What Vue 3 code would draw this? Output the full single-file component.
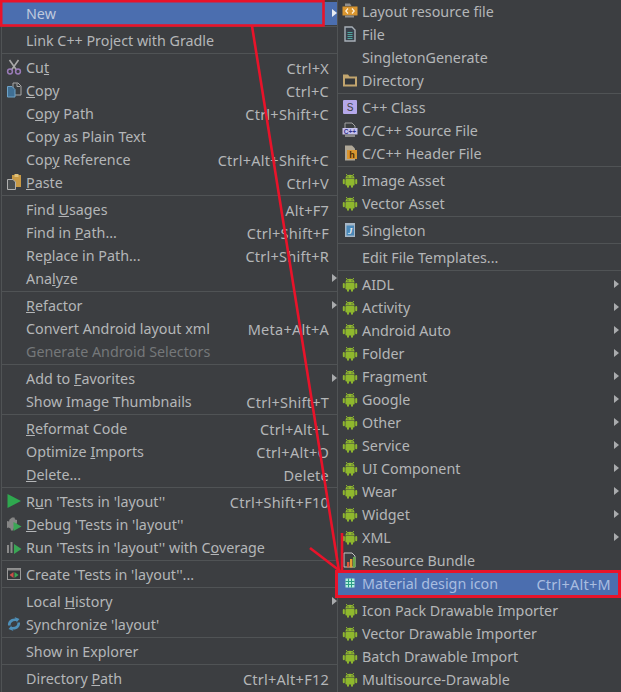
<template>
  <div class="screen">
    <svg class="defs" width="0" height="0">
      <defs>
        <symbol id="android" viewBox="0 0 16 16">
          <path d="M4.2 2 5.4 3.6M11.8 2 10.6 3.6" stroke="#8fb82e" stroke-width="1" fill="none"/>
          <path d="M3.4 6.4C3.6 3.9 5.6 2.8 8 2.8s4.4 1.1 4.6 3.6z" fill="#8fb82e"/>
          <rect x="3.4" y="7" width="9.2" height="6.4" rx="1" fill="#8fb82e"/>
          <rect x="0.8" y="7" width="2" height="5.2" rx="1" fill="#8fb82e"/>
          <rect x="13.2" y="7" width="2" height="5.2" rx="1" fill="#8fb82e"/>
          <rect x="5" y="12.6" width="2" height="3.2" rx="1" fill="#8fb82e"/>
          <rect x="9" y="12.6" width="2" height="3.2" rx="1" fill="#8fb82e"/>
          <circle cx="6" cy="4.8" r=".6" fill="#3c3f41"/>
          <circle cx="10" cy="4.8" r=".6" fill="#3c3f41"/>
        </symbol>
        <symbol id="cut" viewBox="0 0 16 16">
          <path d="M3.5 1 10.5 11M12.5 1 5.5 11" stroke="#a9a9a9" stroke-width="1.6" fill="none"/>
          <circle cx="4" cy="12.5" r="2.4" fill="none" stroke="#9a7bb8" stroke-width="1.5"/>
          <circle cx="12" cy="12.5" r="2.4" fill="none" stroke="#9a7bb8" stroke-width="1.5"/>
        </symbol>
        <symbol id="copy" viewBox="0 0 16 16">
          <path d="M7 1h5l3 3v9H7z" fill="#3c3f41" stroke="#a8a8a8"/>
          <path d="M1.500 4.500H6l3 3v7.500H1.500z" fill="#3f6f94" stroke="#6fa3c7"/>
          <path d="M11 1.500v3h3" fill="none" stroke="#a8a8a8"/>
        </symbol>
        <symbol id="paste" viewBox="0 0 16 16">
          <rect x="6" y="1" width="9" height="12" fill="#c99a45"/>
          <rect x="8.500" y="0" width="4" height="3" fill="#e0c078"/>
          <path d="M1.500 5.500H7l2.500 2.500v7.500h-8z" fill="#4a4d4f" stroke="#b0b0b0"/>
        </symbol>
        <symbol id="run" viewBox="0 0 16 16">
          <path d="M1.500 1 15 8 1.500 15z" fill="#2fa84f"/>
        </symbol>
        <symbol id="debug" viewBox="0 0 16 16">
          <path d="M6 1.500h2.500l.5 2 2 .5v3l-3 5-1 2.500H5l-.5-2-2-1-1.500.5V5l2 .5.500-2z" fill="#858585"/>
          <path d="M7.500 6 15.500 10.500 7.500 15z" fill="#3aa655"/>
        </symbol>
        <symbol id="coverage" viewBox="0 0 16 16">
          <rect x="1" y="6" width="2" height="8" fill="#8a8a8a"/>
          <rect x="4.500" y="3" width="2" height="11" fill="#8a8a8a"/>
          <path d="M8 5 15.500 10 8 15z" fill="#3aa655"/>
        </symbol>
        <symbol id="create" viewBox="0 0 16 16">
          <rect x="1.500" y="2.500" width="13" height="11" fill="#34373a" stroke="#9a9a9a"/>
          <rect x="1.500" y="2.500" width="13" height="2" fill="#8a8a8a"/>
          <path d="M7.500 6v6L3.500 9z" fill="#c9504a"/>
          <path d="M8.500 6v6l4-3z" fill="#3aa655"/>
        </symbol>
        <symbol id="sync" viewBox="0 0 16 16">
          <path d="M2 9.500C1.500 5 5 2 9.500 2.500L8.500 1l5 2-3 3.500V5C7 4.500 4.500 6 4.500 9.500z" fill="#4e8fb8"/>
          <path d="M14 6.500C14.500 11 11 14 6.500 13.500L7.500 15l-5-2 3-3.500V11c3.500.5 6-1 6-4.500z" fill="#4e8fb8"/>
        </symbol>
        <symbol id="layout" viewBox="0 0 16 16">
          <path d="M3 3V0.500h5L9.500 3z" fill="#8e8e8e"/>
          <rect x="0.500" y="3.500" width="15" height="9" fill="#d9952f"/>
          <path d="M6 5.500 3.800 8 6 10.500M10 5.500 12.200 8 10 10.500" stroke="#fff2d8" stroke-width="1.200" fill="none"/>
          <rect x="3" y="12.500" width="9" height="2" fill="#8e8e8e"/>
        </symbol>
        <symbol id="file" viewBox="0 0 16 16">
          <path d="M3 1h7l3 3v11H3z" fill="#38404a" stroke="#a8b0b8" stroke-width="1.400"/>
          <path d="M5.500 6.500h5M5.500 8.500h5M5.500 10.500h5M5.500 12.500h5" stroke="#4fa7a0"/>
        </symbol>
        <symbol id="folder" viewBox="0 0 16 16">
          <path d="M1 2.500h5l1.500 2H15v10H1z" fill="#c2a56e"/>
          <rect x="3" y="6.500" width="10" height="6" fill="#34373a"/>
        </symbol>
        <symbol id="cppclass" viewBox="0 0 16 16">
          <rect x="1" y="1" width="14" height="14" rx="1" fill="#b5a8ea"/>
          <text x="8" y="12" font-size="10" text-anchor="middle" fill="#3c3f41" font-family="Liberation Sans, sans-serif">S</text>
        </symbol>
        <symbol id="cppfile" viewBox="0 0 16 16">
          <path d="M3 1h7l3 3v3H3z" fill="#3c3f41" stroke="#a0a0a0"/>
          <rect x="0.500" y="6" width="15" height="6.500" fill="#c6c1ee"/>
          <text x="8" y="11.500" font-size="6.500" font-weight="700" text-anchor="middle" fill="#33338a" font-family="Liberation Sans, sans-serif">C++</text>
          <path d="M3 12.500h10v2.500H3z" fill="#8a8a8a"/>
        </symbol>
        <symbol id="header" viewBox="0 0 16 16">
          <path d="M3 0.500h7l3 3v12H3z" fill="#b0a898"/>
          <rect x="5" y="5" width="10" height="9" fill="#d9952f"/>
          <text x="10" y="12.500" font-size="9" font-weight="700" text-anchor="middle" fill="#4d2c05" font-family="Liberation Sans, sans-serif">h</text>
        </symbol>
        <symbol id="singleton" viewBox="0 0 16 16">
          <path d="M3 1h10v14H3z" fill="#a7b7c6"/>
          <rect x="4.500" y="3.500" width="7.500" height="10" fill="#4a88b8"/>
          <text x="8.200" y="12" font-size="9" font-style="italic" font-weight="700" text-anchor="middle" fill="#e6edf3" font-family="Liberation Serif, serif">J</text>
        </symbol>
        <symbol id="bundle" viewBox="0 0 16 16">
          <path d="M2 1h8l3 3v11H2z" fill="#3c3f41" stroke="#c4c4c4"/>
          <rect x="5" y="10" width="2.400" height="5.500" fill="#d95b3c"/>
          <rect x="8" y="7" width="2.400" height="8.500" fill="#e0a030"/>
          <rect x="11" y="5" width="2.400" height="10.500" fill="#66a84a"/>
        </symbol>
        <symbol id="grid" viewBox="0 0 16 16">
          <rect x="3.500" y="3.500" width="9" height="9" fill="#b4f0de"/>
          <path d="M6.500 3.500v9M9.500 3.500v9M3.500 6.500h9M3.500 9.500h9" stroke="#2b9c86" stroke-width="1"/>
        </symbol>
      </defs>
    </svg>

    <div class="menus">
      <div class="menu menu-left">
        <template v-for="(item, i) in leftItems" :key="i">
          <div v-if="item.sep" class="sep"></div>
          <div v-else class="row" :class="{ active: item.active, disabled: item.disabled }">
            <svg v-if="item.icon" class="icon" width="16" height="16"><use :href="'#' + item.icon" /></svg>
            <span class="label">{{ before(item) }}<u v-if="item.u !== undefined">{{ item.label[item.u] }}</u>{{ after(item) }}</span>
            <span v-if="item.key" class="key">{{ item.key }}</span>
            <i v-if="item.sub" class="arrow"></i>
          </div>
        </template>
      </div>
      <div class="menu menu-right">
        <template v-for="(item, i) in rightItems" :key="i">
          <div v-if="item.sep" class="sep"></div>
          <div v-else class="row" :class="{ active: item.active }">
            <svg v-if="item.icon" class="icon" width="16" height="16"><use :href="'#' + item.icon" /></svg>
            <span class="label">{{ item.label }}</span>
            <span v-if="item.key" class="key">{{ item.key }}</span>
            <i v-if="item.sub" class="arrow"></i>
          </div>
        </template>
      </div>
    </div>

    <!-- red marks drawn over the screenshot -->
    <svg class="marks" width="621" height="692">
      <g fill="none" stroke="#e8132a">
        <rect x="1.200" y="1.200" width="322.300" height="24.300" stroke-width="2.600" />
        <rect x="336.500" y="571.500" width="283" height="25" stroke-width="3" />
        <path d="M252 26 339 571" stroke-width="2.600" />
        <path d="M310 548 340 571" stroke-width="2.600" />
        <path d="M342 533V571" stroke-width="2.600" />
      </g>
    </svg>
  </div>
</template>

<script setup>
const sep = { sep: true }

const leftItems = [
  { label: 'New', active: true, sub: true },
  sep,
  { label: 'Link C++ Project with Gradle' },
  sep,
  { label: 'Cut', u: 2, key: 'Ctrl+X', icon: 'cut' },
  { label: 'Copy', u: 0, key: 'Ctrl+C', icon: 'copy' },
  { label: 'Copy Path', u: 1, key: 'Ctrl+Shift+C' },
  { label: 'Copy as Plain Text' },
  { label: 'Copy Reference', u: 3, key: 'Ctrl+Alt+Shift+C' },
  { label: 'Paste', u: 0, key: 'Ctrl+V', icon: 'paste' },
  sep,
  { label: 'Find Usages', u: 5, key: 'Alt+F7' },
  { label: 'Find in Path...', u: 8, key: 'Ctrl+Shift+F' },
  { label: 'Replace in Path...', u: 2, key: 'Ctrl+Shift+R' },
  { label: 'Analyze', u: 3, sub: true },
  sep,
  { label: 'Refactor', u: 0, sub: true },
  { label: 'Convert Android layout xml', key: 'Meta+Alt+A' },
  { label: 'Generate Android Selectors', disabled: true },
  sep,
  { label: 'Add to Favorites', u: 7, sub: true },
  { label: 'Show Image Thumbnails', key: 'Ctrl+Shift+T' },
  sep,
  { label: 'Reformat Code', u: 0, key: 'Ctrl+Alt+L' },
  { label: 'Optimize Imports', u: 9, key: 'Ctrl+Alt+O' },
  { label: 'Delete...', u: 0, key: 'Delete' },
  sep,
  { label: "Run 'Tests in 'layout''", u: 1, key: 'Ctrl+Shift+F10', icon: 'run' },
  { label: "Debug 'Tests in 'layout''", u: 0, icon: 'debug' },
  { label: "Run 'Tests in 'layout'' with Coverage", u: 30, icon: 'coverage' },
  sep,
  { label: "Create 'Tests in 'layout''...", icon: 'create' },
  sep,
  { label: 'Local History', u: 6, sub: true },
  { label: "Synchronize 'layout'", icon: 'sync' },
  sep,
  { label: 'Show in Explorer' },
  sep,
  { label: 'Directory Path', u: 10, key: 'Ctrl+Alt+F12' }
]

const rightItems = [
  { label: 'Layout resource file', icon: 'layout' },
  { label: 'File', icon: 'file' },
  { label: 'SingletonGenerate' },
  { label: 'Directory', icon: 'folder' },
  sep,
  { label: 'C++ Class', icon: 'cppclass' },
  { label: 'C/C++ Source File', icon: 'cppfile' },
  { label: 'C/C++ Header File', icon: 'header' },
  sep,
  { label: 'Image Asset', icon: 'android' },
  { label: 'Vector Asset', icon: 'android' },
  sep,
  { label: 'Singleton', icon: 'singleton' },
  sep,
  { label: 'Edit File Templates...' },
  sep,
  ...['AIDL', 'Activity', 'Android Auto', 'Folder', 'Fragment', 'Google', 'Other', 'Service', 'UI Component', 'Wear', 'Widget', 'XML'].map((label) => ({ label, icon: 'android', sub: true })),
  { label: 'Resource Bundle', icon: 'bundle' },
  { label: 'Material design icon', key: 'Ctrl+Alt+M', icon: 'grid', active: true },
  sep,
  { label: 'Icon Pack Drawable Importer', icon: 'android' },
  { label: 'Vector Drawable Importer', icon: 'android' },
  { label: 'Batch Drawable Import', icon: 'android' },
  { label: 'Multisource-Drawable', icon: 'android' }
]

function before(item) {
  return item.u === undefined ? item.label : item.label.slice(0, item.u)
}

function after(item) {
  return item.u === undefined ? '' : item.label.slice(item.u + 1)
}
</script>

<style>
html,
body {
  margin: 0;
  background: #3c3e41;
}
</style>

<style scoped>
.screen {
  position: relative;
  width: 621px;
  height: 692px;
  overflow: hidden;
  background: #3c3e41;
  font-family: "Noto Sans", "Open Sans", sans-serif;
  font-size: 14.3px;
  color: #b4b6b8;
}

.defs {
  position: absolute;
}

.menus {
  display: flex;
  height: 100%;
}

.menu-left {
  box-sizing: border-box;
  width: 337px;
  padding: 2px 0 0 0;
  margin-left: 1px;
  border-left: 1px solid #505355;
  border-right: 1px solid #505355;
  flex-shrink: 0;
}

.menu-right {
  flex: 1;
  min-width: 0;
}

.row {
  position: relative;
  display: flex;
  align-items: center;
  justify-content: space-between;
  height: 23px;
  padding: 0 8px 0 24px;
  white-space: nowrap;
}

.menu-right .row.active {
  padding-right: 10px;
  color: #a9bde0;
}

.row.active {
  background: #4b6eaf;
  color: #bfc9dd;
}

.row.disabled {
  color: #75787a;
}

.key {
  font-size: 14.5px;
  letter-spacing: 0.25px;
}

.icon {
  position: absolute;
  left: 4px;
  top: 3px;
}

.arrow {
  position: absolute;
  right: 0;
  top: 7px;
  width: 0;
  height: 0;
  border-left: 5px solid #a9abad;
  border-top: 4px solid transparent;
  border-bottom: 4px solid transparent;
}

.row.active .arrow {
  border-left-color: #e8ecf2;
}

.menu-right .arrow {
  right: 2px;
}

.sep {
  box-sizing: border-box;
  height: 4px;
  padding-top: 1px;
}

.sep::before {
  content: "";
  display: block;
  height: 1px;
  background: #505355;
}

.marks {
  position: absolute;
  left: 0;
  top: 0;
  pointer-events: none;
}
</style>
